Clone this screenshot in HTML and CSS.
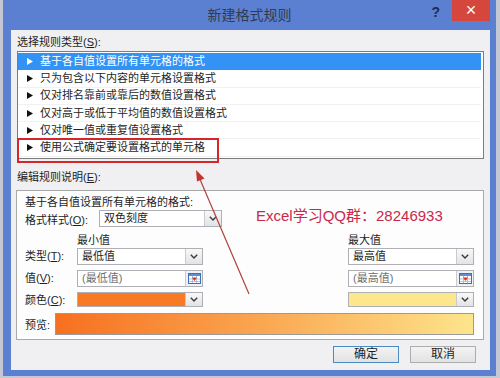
FILE: index.html
```html
<!DOCTYPE html>
<html lang="zh-CN">

<head>
    <meta charset="UTF-8">
    <title>新建格式规则</title>
    <link rel="stylesheet" href="styles.css">
</head>

<body>

    <div class="window">
        <div class="titlebar">
            <span></span>
            <span class="title">新建格式规则</span>
            <div class="title-btns">
                <span class="help">?</span>
                <span class="close">&times;</span>
            </div>
        </div>

        <div class="content">
            <div class="label">选择规则类型(<u>S</u>):</div>
            <div class="listbox">
                <div class="rule selected"><svg class="tri" viewBox="0 0 6 7"><path d="M0 0L6 3.5L0 7Z"/></svg>基于各自值设置所有单元格的格式</div>
                <div class="rule"><svg class="tri" viewBox="0 0 6 7"><path d="M0 0L6 3.5L0 7Z"/></svg>只为包含以下内容的单元格设置格式</div>
                <div class="rule"><svg class="tri" viewBox="0 0 6 7"><path d="M0 0L6 3.5L0 7Z"/></svg>仅对排名靠前或靠后的数值设置格式</div>
                <div class="rule"><svg class="tri" viewBox="0 0 6 7"><path d="M0 0L6 3.5L0 7Z"/></svg>仅对高于或低于平均值的数值设置格式</div>
                <div class="rule"><svg class="tri" viewBox="0 0 6 7"><path d="M0 0L6 3.5L0 7Z"/></svg>仅对唯一值或重复值设置格式</div>
                <div class="rule"><svg class="tri" viewBox="0 0 6 7"><path d="M0 0L6 3.5L0 7Z"/></svg>使用公式确定要设置格式的单元格</div>
            </div>

            <div class="label section">编辑规则说明(<u>E</u>):</div>
            <div class="editbox">
                <div class="line">基于各自值设置所有单元格的格式:</div>
                <div class="style-row">
                    <span class="style-lbl">格式样式(<u>O</u>):</span>
                    <div class="combo style-combo">
                        <span class="val">双色刻度</span>
                        <span class="drop"><svg viewBox="0 0 8 5"><path d="M0.8 0.8L4 4L7.2 0.8"/></svg></span>
                    </div>
                    <span class="watermark">Excel学习QQ群：28246933</span>
                </div>

                <div class="scale">
                    <span></span>
                    <span class="head">最小值</span>
                    <span></span>
                    <span class="head">最大值</span>

                    <span class="lbl">类型(<u>T</u>):</span>
                    <div class="combo">
                        <span class="val">最低值</span>
                        <span class="drop"><svg viewBox="0 0 8 5"><path d="M0.8 0.8L4 4L7.2 0.8"/></svg></span>
                    </div>
                    <span></span>
                    <div class="combo">
                        <span class="val">最高值</span>
                        <span class="drop"><svg viewBox="0 0 8 5"><path d="M0.8 0.8L4 4L7.2 0.8"/></svg></span>
                    </div>

                    <span class="lbl">值(<u>V</u>):</span>
                    <div class="field">
                        <span class="val hint">(最低值)</span>
                        <span class="pick"><svg viewBox="0 0 13 11"><rect x="0.5" y="0.5" width="12" height="10" fill="#fff" stroke="#3c6fb6"/><rect x="1" y="1" width="11" height="2" fill="#5f8fd0"/><path d="M1 6H12M1 8.5H12M4.5 3V10M8.5 3V10" stroke="#9db5d8" stroke-width="0.8"/><path d="M4 4.5L9 4.5L6.5 8Z" fill="#d9302a"/></svg></span>
                    </div>
                    <span></span>
                    <div class="field">
                        <span class="val hint">(最高值)</span>
                        <span class="pick"><svg viewBox="0 0 13 11"><rect x="0.5" y="0.5" width="12" height="10" fill="#fff" stroke="#3c6fb6"/><rect x="1" y="1" width="11" height="2" fill="#5f8fd0"/><path d="M1 6H12M1 8.5H12M4.5 3V10M8.5 3V10" stroke="#9db5d8" stroke-width="0.8"/><path d="M4 4.5L9 4.5L6.5 8Z" fill="#d9302a"/></svg></span>
                    </div>

                    <span class="lbl">颜色(<u>C</u>):</span>
                    <div class="combo color">
                        <span class="swatch min-color"></span>
                        <span class="drop"><svg viewBox="0 0 8 5"><path d="M0.8 0.8L4 4L7.2 0.8"/></svg></span>
                    </div>
                    <span></span>
                    <div class="combo color">
                        <span class="swatch max-color"></span>
                        <span class="drop"><svg viewBox="0 0 8 5"><path d="M0.8 0.8L4 4L7.2 0.8"/></svg></span>
                    </div>
                </div>

                <div class="preview-row">
                    <span class="preview-lbl">预览:</span>
                    <div class="preview"></div>
                </div>
            </div>

            <div class="buttons">
                <button class="btn default">确定</button>
                <button class="btn">取消</button>
            </div>
        </div>
    </div>

    <!-- 標註：紅框與箭頭 -->
    <div class="highlight"></div>
    <svg class="arrow" viewBox="0 0 500 378">
        <line x1="249" y1="294" x2="199" y2="177" />
        <path d="M196 170L204.5 178.5L197 181.5Z" />
    </svg>

</body>

</html>
```

FILE: styles.css
```css
* {
    margin: 0;
    padding: 0;
    box-sizing: border-box;
}

html,
body {
    width: 500px;
    height: 378px;
    overflow: hidden;
}

body {
    position: relative;
    background-color: #c3c8d4;
    font-family: "Liberation Sans", "Noto Sans CJK SC", sans-serif;
    font-size: 11px;
    color: #1e1e1e;
}

u {
    text-underline-offset: 1px;
}

.window {
    width: 493px;
    height: 376px;
    margin-left: 3px;
    background-color: #5b80d1;
    display: flex;
    flex-direction: column;
}

/* title bar */

.titlebar {
    height: 30px;
    display: grid;
    grid-template-columns: 1fr auto 1fr;
    align-items: start;
}

.title {
    font-size: 14px;
    line-height: 30px;
    color: #333a4c;
}

.title-btns {
    display: flex;
    justify-content: flex-end;
    align-items: flex-start;
    padding-right: 6px;
}

.help {
    font-size: 14px;
    font-weight: bold;
    line-height: 24px;
    color: #1d2c52;
    margin-right: 12px;
}

.close {
    width: 38px;
    height: 21px;
    background-color: #d5473c;
    color: #fff;
    font-size: 18px;
    line-height: 20px;
    text-align: center;
}

/* dialog body */

.content {
    height: 340px;
    margin-left: 8px;
    width: 479px;
    background-color: #f0eff1;
    padding: 4px 6px 0 6px;
}

.label {
    line-height: 17px;
    height: 17px;
}

.label.section {
    margin-top: 10px;
}

.listbox {
    height: 108px;
    background-color: #fff;
    border: 1px solid #7c7c7c;
    padding: 1px 2px 1px 0;
}

.rule {
    height: 17.3px;
    line-height: 17px;
    display: flex;
    align-items: center;
    padding-left: 9px;
    border-bottom: 1px solid #f2f2f2;
}

.rule .tri {
    width: 6px;
    height: 7px;
    margin-right: 7px;
    fill: #111;
}

.rule.selected {
    background-color: #3293f5;
    color: #fff;
    border-bottom-color: #3293f5;
}

.rule.selected .tri {
    fill: #fff;
}

.editbox {
    height: 150px;
    margin-top: 4px;
    margin-left: -1px;
    background-color: #fdfdfd;
    border: 1px solid #a9a9a9;
    padding: 3px 9px 0 8px;
}

.line {
    line-height: 16px;
}

.style-row {
    display: flex;
    align-items: center;
    height: 17px;
}

.style-lbl {
    width: 74px;
}

.style-combo {
    width: 123px;
}

.watermark {
    margin-left: 34px;
    margin-top: -8px;
    font-size: 15px;
    color: #c8294b;
    white-space: nowrap;
}

/* combos and fields */

.combo,
.field {
    height: 17px;
    display: flex;
    background-color: #fff;
    border: 1px solid #aeb0b6;
}

.val {
    flex: 1;
    line-height: 15px;
    padding-left: 4px;
}

.hint {
    color: #707070;
}

.drop,
.pick {
    width: 17px;
    border-left: 1px solid #c9cacf;
    background: linear-gradient(#f8f8f8, #e2e3e6);
    display: flex;
    align-items: center;
    justify-content: center;
}

.drop svg {
    width: 8px;
    height: 5px;
    fill: none;
    stroke: #3a3a3a;
    stroke-width: 1.4;
}

.pick {
    background: #eef2f8;
}

.pick svg {
    width: 13px;
    height: 11px;
}

.combo.color {
    height: 15px;
}

.swatch {
    flex: 1;
}

.min-color {
    background-color: #f97a26;
}

.max-color {
    background-color: #fee68c;
}

.scale {
    margin-top: 5px;
    display: grid;
    grid-template-columns: 52px 126px 1fr 126px;
    grid-template-rows: 16px 22px 22px 15px;
    align-items: start;
}

.head {
    line-height: 16px;
}

.lbl {
    line-height: 17px;
}

.preview-row {
    display: flex;
    align-items: center;
    margin-top: 6px;
}

.preview-lbl {
    width: 30px;
}

.preview {
    flex: 1;
    height: 22px;
    border: 1px solid #9a9a9a;
    background: linear-gradient(to right, #f7701f, #faa752 50%, #fde58c);
}

/* buttons */

.buttons {
    display: flex;
    justify-content: flex-end;
    gap: 11px;
    margin-top: 6px;
    padding-right: 8px;
}

.btn {
    width: 66px;
    height: 17px;
    font-family: "Liberation Sans", "Noto Sans CJK SC", sans-serif;
    font-size: 12px;
    line-height: 15px;
    color: #1e1e1e;
    background: linear-gradient(#f3f3f3, #e2e2e2);
    border: 1px solid #adadad;
}

.btn.default {
    border-color: #4a8bc4;
}

/* annotation overlays */

.highlight {
    position: absolute;
    left: 17px;
    top: 138px;
    width: 202px;
    height: 25px;
    border: 2px solid #d4262b;
}

.arrow {
    position: absolute;
    left: 0;
    top: 0;
    width: 500px;
    height: 378px;
    pointer-events: none;
}

.arrow line {
    stroke: #b0423e;
    stroke-width: 1.2;
}

.arrow path {
    fill: #c8302c;
}
```
